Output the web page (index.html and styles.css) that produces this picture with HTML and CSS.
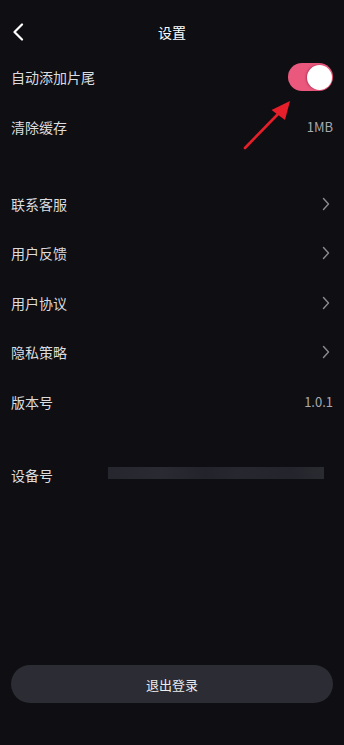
FILE: index.html
```html
<!DOCTYPE html>
<html lang="zh">
<head>
<meta charset="utf-8">
<title>设置</title>
<link rel="stylesheet" href="styles.css">
</head>
<body>
<div class="page">
  <header class="header">
    <svg class="back" width="12" height="18" viewBox="0 0 12 18"><path d="M10 1.5 L2.5 9 L10 16.5" fill="none" stroke="#ffffff" stroke-width="2.2" stroke-linecap="round" stroke-linejoin="round"/></svg>
    <div class="title">设置</div>
  </header>

  <div class="row">
    <span class="label">自动添加片尾</span>
    <span class="toggle"><span class="knob"></span></span>
  </div>
  <div class="row">
    <span class="label">清除缓存</span>
    <span class="value">1MB</span>
  </div>

  <div class="group">
    <div class="row row-b">
      <span class="label">联系客服</span>
      <svg class="chev" width="8" height="14" viewBox="0 0 8 14"><path d="M1.5 1.5 L6.5 7 L1.5 12.5" fill="none" stroke="#8a8a90" stroke-width="1.4" stroke-linecap="round" stroke-linejoin="round"/></svg>
    </div>
    <div class="row row-b">
      <span class="label">用户反馈</span>
      <svg class="chev" width="8" height="14" viewBox="0 0 8 14"><path d="M1.5 1.5 L6.5 7 L1.5 12.5" fill="none" stroke="#8a8a90" stroke-width="1.4" stroke-linecap="round" stroke-linejoin="round"/></svg>
    </div>
    <div class="row row-b">
      <span class="label">用户协议</span>
      <svg class="chev" width="8" height="14" viewBox="0 0 8 14"><path d="M1.5 1.5 L6.5 7 L1.5 12.5" fill="none" stroke="#8a8a90" stroke-width="1.4" stroke-linecap="round" stroke-linejoin="round"/></svg>
    </div>
    <div class="row row-b">
      <span class="label">隐私策略</span>
      <svg class="chev" width="8" height="14" viewBox="0 0 8 14"><path d="M1.5 1.5 L6.5 7 L1.5 12.5" fill="none" stroke="#8a8a90" stroke-width="1.4" stroke-linecap="round" stroke-linejoin="round"/></svg>
    </div>
    <div class="row row-b">
      <span class="label">版本号</span>
      <span class="value">1.0.1</span>
    </div>
  </div>

  <div class="row device">
    <span class="label">设备号</span>
    <span class="blur"></span>
  </div>

  <div class="footer">
    <button class="logout">退出登录</button>
  </div>

  <svg class="arrow" width="344" height="200" viewBox="0 0 344 200">
    <line x1="245" y1="148" x2="279" y2="113" stroke="#e61f2a" stroke-width="2.6" stroke-linecap="round"/>
    <polygon points="290,101 271.5,110 285,120" fill="#e61f2a"/>
  </svg>
</div>
</body>
</html>
```

FILE: styles.css
```css
* { box-sizing: border-box; }
html, body { margin: 0; padding: 0; }
body {
  background: #0e0e13;
  font-family: "Noto Sans CJK SC", "Noto Sans", sans-serif;
  color: #dcdcdf;
}
.page {
  position: relative;
  width: 344px;
  height: 745px;
  display: flex;
  flex-direction: column;
}
.header {
  height: 52px;
  padding-top: 12px;
  display: flex;
  align-items: center;
  justify-content: center;
  position: relative;
}
.back {
  position: absolute;
  left: 12px;
  top: 23px;
}
.title {
  font-size: 14px;
  color: #ffffff;
  line-height: 20px;
}
.row {
  height: 50px;
  display: flex;
  align-items: center;
  justify-content: space-between;
  padding: 0 11px 0 11px;
  flex-shrink: 0;
}
.row-b { height: 49.5px; }
.label {
  font-size: 14px;
  line-height: 20px;
  color: #dcdcdf;
}
.value {
  font-size: 13px;
  color: #a9a9ae;
  line-height: 20px;
}
.toggle {
  width: 45px;
  height: 28px;
  border-radius: 14px;
  background: #ea587d;
  display: flex;
  align-items: center;
  justify-content: flex-end;
  padding-right: 1px;
}
.knob {
  width: 25px;
  height: 25px;
  border-radius: 50%;
  background: #ffffff;
  box-shadow: -1px 0 2px rgba(120, 20, 50, 0.5);
}
.chev { margin-right: 3px; }
.group { margin-top: 27px; }
.device { margin-top: 23px; }
.blur {
  width: 216px;
  height: 12px;
  margin-right: 9px;
  margin-top: -4px;
  background: linear-gradient(90deg, #26262e 0%, #2a2a33 25%, #23232b 45%, #27272f 60%, #24242c 85%, #2a2a31 100%);
  filter: blur(0.6px);
}
.footer {
  margin-top: auto;
  padding: 0 11px 42px 11px;
}
.logout {
  display: block;
  width: 100%;
  height: 38px;
  border: none;
  border-radius: 19px;
  background: #2c2c34;
  color: #ececef;
  font-family: "Noto Sans CJK SC", "Noto Sans", sans-serif;
  font-size: 13px;
  padding: 0;
}
.arrow {
  position: absolute;
  left: 0;
  top: 0;
  pointer-events: none;
}
```
